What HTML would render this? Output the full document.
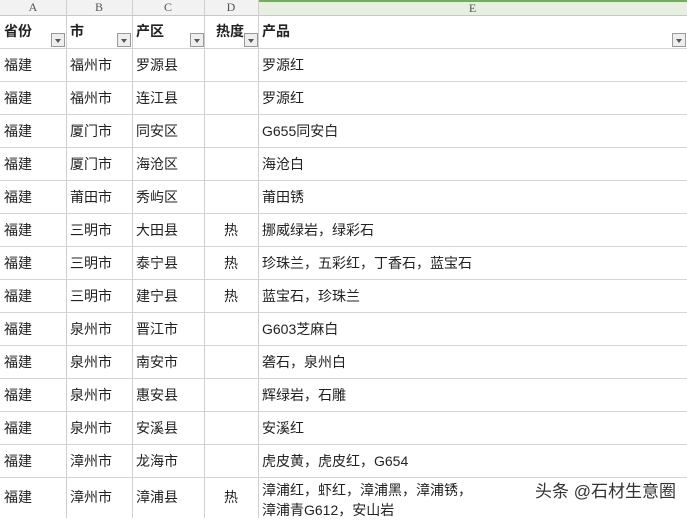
<!DOCTYPE html>
<html><head><meta charset="utf-8"><style>
body{margin:0;width:687px;height:518px;overflow:hidden;background:#fff;font-family:"Liberation Sans","Noto Sans CJK SC",sans-serif;position:relative}
.c{position:absolute;font-size:14px;color:#222;line-height:1}
.v{position:absolute;top:0;width:1px;height:518px;background:#cfcfcf}
.h{position:absolute;left:0;width:687px;height:1px;background:#d4d4d4}
.colh{position:absolute;top:0;height:15px;background:#f2f2f2;border-bottom:1px solid #c8c8c8;font-family:"Liberation Serif",serif;font-size:12px;color:#555;text-align:center;line-height:15px}
.dd{position:absolute;width:12px;height:12px;border:1px solid #999;background:#eee;top:33px}
.dd:after{content:"";position:absolute;left:3px;top:5px;border:3px solid transparent;border-top:4px solid #555}
</style></head><body>
<div class="colh" style="left:0;width:66px">A</div>
<div class="colh" style="left:66px;width:66px">B</div>
<div class="colh" style="left:132px;width:72px">C</div>
<div class="colh" style="left:204px;width:54px">D</div>
<div class="colh" style="left:258px;width:429px;background:#e6efe0;border-top:2px solid #6cb358;height:13px;line-height:13px">E</div>
<div class="v" style="left:66px"></div><div class="v" style="left:132px"></div><div class="v" style="left:204px"></div><div class="v" style="left:258px"></div>
<div class="h" style="top:48px"></div>
<div class="c" style="left:4px;top:24px;font-weight:bold">省份</div>
<div class="c" style="left:70px;top:24px;font-weight:bold">市</div>
<div class="c" style="left:136px;top:24px;font-weight:bold">产区</div>
<div class="c" style="left:216px;top:24px;font-weight:bold">热度</div>
<div class="c" style="left:262px;top:24px;font-weight:bold">产品</div>
<div class="dd" style="left:51px"></div><div class="dd" style="left:117px"></div><div class="dd" style="left:190px"></div><div class="dd" style="left:244px"></div><div class="dd" style="left:672px"></div>
<div id="rows"></div>
<script>
var d=[["福州市","罗源县","","罗源红"],["福州市","连江县","","罗源红"],["厦门市","同安区","","G655同安白"],["厦门市","海沧区","","海沧白"],["莆田市","秀屿区","","莆田锈"],["三明市","大田县","热","挪威绿岩，绿彩石"],["三明市","泰宁县","热","珍珠兰，五彩红，丁香石，蓝宝石"],["三明市","建宁县","热","蓝宝石，珍珠兰"],["泉州市","晋江市","","G603芝麻白"],["泉州市","南安市","","砻石，泉州白"],["泉州市","惠安县","","辉绿岩，石雕"],["泉州市","安溪县","","安溪红"],["漳州市","龙海市","","虎皮黄，虎皮红，G654"],["漳州市","漳浦县","热","漳浦红，虾红，漳浦黑，漳浦锈，<br>漳浦青G612，安山岩"]];
var h="";
d.forEach(function(r,i){var y=48+i*33;var t=y+10;
var tt=(i==13?y+13:t);
h+='<div class="c" style="left:4px;top:'+tt+'px">福建</div><div class="c" style="left:70px;top:'+tt+'px">'+r[0]+'</div><div class="c" style="left:136px;top:'+tt+'px">'+r[1]+'</div><div class="c" style="left:224px;top:'+tt+'px">'+r[2]+'</div><div class="c" style="left:262px;top:'+(i==13?y+3:t)+'px;line-height:'+(i==13?'20px':'1')+'">'+r[3]+'</div>';
if(i<13)h+='<div class="h" style="top:'+(y+33)+'px"></div>';});
document.getElementById('rows').innerHTML=h;
</script>
<div class="c" style="left:535px;top:483px;font-size:17px;color:#333;text-shadow:0 0 2px #fff">头条 @石材生意圈</div>
</body></html>
